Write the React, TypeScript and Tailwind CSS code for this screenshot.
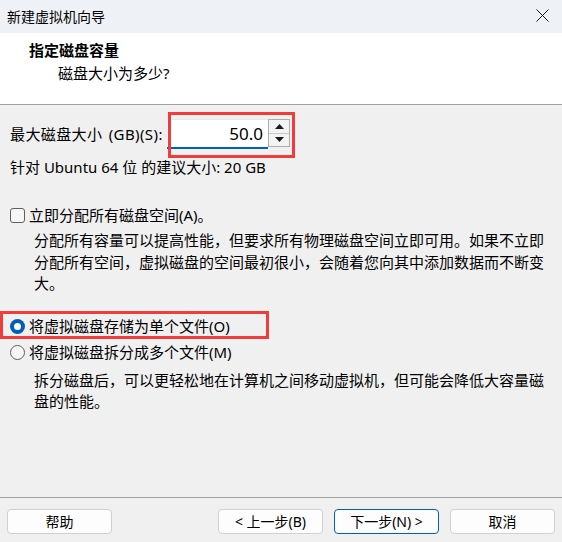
import React from 'react';

const font = { fontFamily: '"Noto Sans", "Noto Sans CJK SC", sans-serif' };

function Checkbox() {
  return <span className="w-[15px] h-[15px] rounded-[3px] border border-[#5f5f5f] bg-[#f6f6f6] shrink-0" />;
}

function Radio({ checked }: { checked?: boolean }) {
  if (checked) {
    return (
      <span className="w-[15px] h-[15px] rounded-full bg-[#005fb8] flex items-center justify-center shrink-0">
        <span className="w-[7px] h-[7px] rounded-full bg-white" />
      </span>
    );
  }
  return <span className="w-[15px] h-[15px] rounded-full border border-[#5f5f5f] bg-[#f6f6f6] shrink-0" />;
}

function Button({ label, primary }: { label: string; primary?: boolean }) {
  return (
    <button
      className={
        primary
          ? 'w-[105px] h-[25px] rounded-[4px] border border-[#005fb8] bg-[#fdfdfd] text-[14px] leading-none text-black'
          : 'w-[105px] h-[25px] rounded-[4px] border border-[#d0d0d0] bg-[#fdfdfd] text-[14px] leading-none text-black'
      }
    >
      {label}
    </button>
  );
}

export default function App() {
  return (
    <div style={font} className="relative w-[562px] h-[542px] bg-[#f0f0f0] flex flex-col text-black overflow-hidden">
      {/* title bar */}
      <div className="h-[33px] bg-[#eef2f6] flex items-center justify-between pl-[7px] pr-[13px]">
        <span className="text-[14px]">新建虚拟机向导</span>
        <svg width="13" height="13" viewBox="0 0 13 13" className="mb-[3px]">
          <path d="M0.5 0.5 L12.5 12.5 M12.5 0.5 L0.5 12.5" stroke="#1a1a1a" strokeWidth="1" fill="none" />
        </svg>
      </div>

      {/* header */}
      <div className="h-[72px] bg-white border-b border-[#a0a0a0] flex flex-col">
        <div className="pl-[29px] pt-[7px] text-[15px] leading-[21px] font-bold">指定磁盘容量</div>
        <div className="pl-[58px] mt-[2px] text-[15px] leading-[21px]">磁盘大小为多少?</div>
      </div>

      {/* body */}
      <div className="flex-1 flex flex-col text-[15px] leading-[21px]">
        <div className="mt-[14px] flex items-center h-[30px]">
          <span className="pl-[10px] w-[167px] tracking-[0.4px] [word-spacing:2px]">最大磁盘大小 (GB)(S):</span>
          <div className="w-[101px] h-[30px] bg-white border-t border-[#e8e8e8] border-b-2 border-b-[#005fb8] flex items-center justify-end pr-[5px] text-[17px]">
            50.0
          </div>
          <div className="w-[22px] h-[28px] mb-[2px] border border-[#adadad] flex flex-col bg-[#f3f3f3]">
            <div className="flex-1 border-b border-[#c8c8c8] flex items-center justify-center">
              <svg width="9" height="5" viewBox="0 0 9 5"><path d="M4.5 0 L9 5 L0 5 Z" fill="#1a1a1a" /></svg>
            </div>
            <div className="flex-1 flex items-center justify-center">
              <svg width="9" height="5" viewBox="0 0 9 5"><path d="M0 0 L9 0 L4.5 5 Z" fill="#1a1a1a" /></svg>
            </div>
          </div>
        </div>
        <div className="mt-[8px] pl-[10px]">针对 Ubuntu 64 位 的建议大小: 20 GB</div>

        <div className="mt-[27px] pl-[10px] flex items-center gap-[4px]">
          <Checkbox />
          <span>立即分配所有磁盘空间(A)。</span>
        </div>
        <p className="mt-[4px] ml-[34px] w-[516px] leading-[21.5px]">
          分配所有容量可以提高性能，但要求所有物理磁盘空间立即可用。如果不立即分配所有空间，虚拟磁盘的空间最初很小，会随着您向其中添加数据而不断变大。
        </p>

        <div className="mt-[21px] pl-[10px] flex items-center gap-[4px]">
          <Radio checked />
          <span>将虚拟磁盘存储为单个文件(O)</span>
        </div>
        <div className="mt-[5px] pl-[10px] flex items-center gap-[4px]">
          <Radio />
          <span>将虚拟磁盘拆分成多个文件(M)</span>
        </div>
        <p className="mt-[7px] ml-[34px] w-[516px] leading-[21.5px]">
          拆分磁盘后，可以更轻松地在计算机之间移动虚拟机，但可能会降低大容量磁盘的性能。
        </p>
      </div>

      {/* footer */}
      <div className="h-[45px] border-t border-[#a0a0a0] flex items-start pt-[11px] px-[7px] justify-between">
        <Button label="帮助" />
        <div className="flex gap-[11px]">
          <Button label="< 上一步(B)" />
          <Button label="下一步(N) >" primary />
          <Button label="取消" />
        </div>
      </div>

      {/* annotation boxes */}
      <div className="absolute left-[168px] top-[112px] w-[127px] h-[46px] border-[3px] border-[#f23b3b]" />
      <div className="absolute left-0 top-[311px] w-[269px] h-[28px] border-[3px] border-[#f23b3b]" />
    </div>
  );
}
